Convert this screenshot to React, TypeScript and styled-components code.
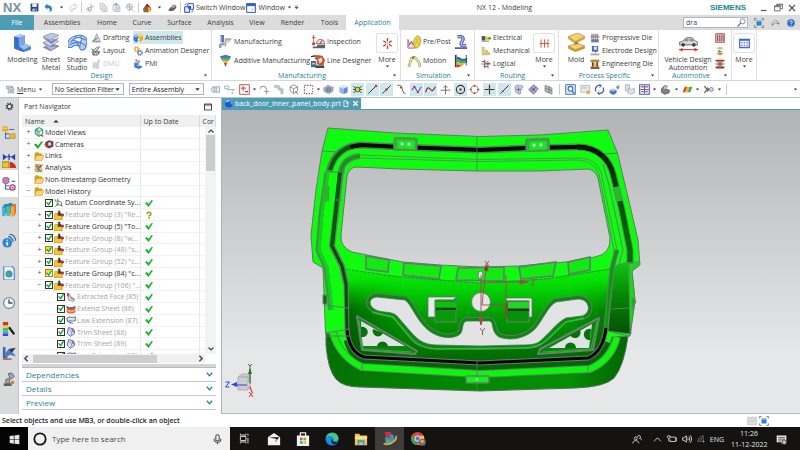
import React from "react";
import styled, { createGlobalStyle } from "styled-components";

const ink = "#3c3c3c";
const teal = "#1f7f9c";
const highlight = "#cfe8ee";
const line = "#c9cbcc";

const GlobalStyle = createGlobalStyle`
  * { box-sizing: border-box; }
  html, body { margin: 0; padding: 0; }
  body, button, input, select {
    font-family: "Open Sans", "Noto Sans", sans-serif;
    font-size: 7px;
    line-height: 9px;
    color: ${ink};
  }
  button { background: none; border: 0; padding: 0; margin: 0; }
  svg { display: block; flex: none; }
`;

/* ---------- icons, all on a 16 x 16 grid ---------- */

const g = "#a9adb0";

const cube = (a: string, b: string, c: string) => (
  <>
    <path d="M8 1l6 3-6 3-6-3z" fill={a} />
    <path d="M2 4l6 3v8l-6-3z" fill={b} />
    <path d="M14 4L8 7v8l6-3z" fill={c} />
  </>
);

const icons: Record<string, React.ReactNode> = {
  save: (
    <>
      <path d="M1 1h14v14H1z" fill="#274a8c" />
      <path d="M4 1h8v6H4z" fill="#eef3fb" />
      <path d="M4 10h8v5H4z" fill="#9eb4dc" />
      <path d="M9 11h2v3H9z" fill="#274a8c" />
    </>
  ),
  undo: <path d="M1 6l5-5v3c6 0 9 3 8 9-1 2-3 3-5 3 3-4 1-7-3-7v3z" fill="#2f7fd6" />,
  redo: <path d="M15 6l-5-5v3C4 4 1 7 2 13c1 1 2 2 4 2-2-4 0-6 4-6v3z" fill="none" stroke={g} />,
  cut: (
    <g stroke={g} strokeWidth="1.6" fill="none">
      <path d="M9 1v14M3 9l11-3" />
      <circle cx="3" cy="11" r="2" />
      <circle cx="6" cy="13" r="2" />
    </g>
  ),
  copy: (
    <g stroke={g} strokeWidth="1.3" fill="#f4f4f4">
      <path d="M2 1h6l2 2v8H2z" />
      <path d="M6 5h6l2 2v8H6z" />
      <path d="M8 9h4M8 12h4" />
    </g>
  ),
  paste: (
    <g stroke={g} strokeWidth="1.3" fill="#f1f1f1">
      <path d="M2 3h10v11H2z" />
      <path d="M5 1h4v3H5z" fill={g} />
      <path d="M7 7h7v8H7zM9 10h3M9 12h3" />
    </g>
  ),
  target: (
    <g stroke={g} strokeWidth="1.4" fill="none">
      <circle cx="8" cy="7" r="5" />
      <path d="M8 0v15M1 7h14M10 10l5 5M3 2l10 10" />
    </g>
  ),
  touch: (
    <>
      <path d="M2 9l5-7 6 3 2 6-6 4-6-1z" fill="#d8342a" />
      <path d="M2 9l3-2 3 7-5 1z" fill="#3a9a38" />
      <path d="M9 6l4 2 1 5-4 1z" fill="#f2b52c" />
      <path d="M6 3l3-2 2 4-3 2z" fill="#63401f" />
    </>
  ),
  brush: (
    <>
      <path d="M1 12l4-5 6 1 3-5 1 5-4 5-6 1z" fill="#4a5fa8" />
      <path d="M6 4l6-2 1 4-5 3z" fill="#e69a3a" />
      <path d="M1 13h8" stroke="#8a5a28" strokeWidth="2" />
    </>
  ),
  switchWin: (
    <g fill="#fff" stroke="#2b55c4" strokeWidth="1.6">
      <path d="M6 1h9v9H6z" />
      <path d="M1 6h8v9H1z" fill="#dbe8ff" />
      <path d="M1 3l3-2M12 14l3-2" />
      <circle cx="9" cy="7" r="2" fill="#2b55c4" />
    </g>
  ),
  windowIc: (
    <>
      <path d="M1 1h14v14H1z" fill="#fff" stroke="#2b55c4" strokeWidth="1.6" />
      <path d="M1 1h14v4H1z" fill="#2b62d8" />
      <path d="M8 8h6v6H8z" fill="#dfe9fb" />
    </>
  ),
  modeling: (
    <>
      <path d="M1 3l5-2 4 1v7l5 2v3l-6 2-8-3z" fill="#4a7fd4" />
      <path d="M1 3l5-2 4 1-5 2z" fill="#b4d0fa" />
      <path d="M1 3l4 1v8l4 2v2l-8-3z" fill="#3b6ec2" />
      <path d="M5 11l5-2 5 2-6 3z" fill="#9abff5" />
      <path d="M5 4l5-2v7l-5 2z" fill="#7aa6ea" />
    </>
  ),
  sheet: (
    <g stroke="#6e7894" strokeWidth=".5">
      <path d="M1 12l7-3 6 2-7 4z" fill="#8696c8" />
      <path d="M1 8l7 3 6 0-7 4z" fill="#a9b4da" />
      <path d="M1 8l7-3 6 2-7 4z" fill="#d3daf3" />
      <path d="M1 4l7 3 6-3-6 5z" fill="#7f8db8" />
      <path d="M1 3l7-3 6 2-7 4z" fill="#bac5e8" />
    </g>
  ),
  shape: (
    <g stroke="#4e7dcb" strokeWidth=".9" fill="none">
      <path d="M0 8C1 2 14-1 16 6l-1 6c-1 3-4 3-5 1-1-4-5-3-7-1-3 1-4-1-3-4z" fill="#b8d0f4" />
      <path d="M2 8c3-4 9-5 13-2M6 3l3 8M1 10c4-2 9-4 14 1M11 2l-1 10" />
      <path d="M4 6c2-2 5-3 8-1l-2 3z" fill="#eef4ff" />
    </g>
  ),
  drafting: (
    <>
      <path d="M5 11L9 1l6 13H7z" fill="#e2cde4" stroke="#8d7eb5" />
      <path d="M1 13L9 7l2 1-7 6z" fill="#5bb04c" />
      <path d="M2 14h13" stroke="#6b88c8" strokeWidth="1.5" />
    </>
  ),
  layout: (
    <>
      <path d="M2 8l9-7 3 1-8 8z" fill="#d7dadd" stroke="#4b4f52" />
      <path d="M1 10l9-3 5 2-4 6H3z" fill="#6d7276" />
      <path d="M3 12h8M5 9l3 6M9 8l2 6" stroke="#fff" strokeWidth=".8" />
      <path d="M1 4l4 5" stroke="#2d8a3a" strokeWidth="1.4" />
    </>
  ),
  dmu: (
    <g fill="#dcdcdc" stroke="#c0c0c0">
      <path d="M3 14V7l3-2 3 2 3-6 2 1-2 7v6z" />
      <path d="M6 8v5M9 8v5" />
    </g>
  ),
  asm: (
    <>
      <path d="M1 5l4-3 4 2v8l-4 3-4-3z" fill="#3b7ddb" />
      <path d="M1 5l4-3 4 2-4 3z" fill="#8fc0ff" />
      <path d="M8 4l4-3 4 3v7l-4 3-4-3z" fill="#f5a81c" />
      <path d="M8 4l4-3 4 3-4 3z" fill="#ffd568" />
      <path d="M8 8l3 2-3 3z" fill="#fff" />
    </>
  ),
  gears: (
    <>
      <circle cx="6" cy="5" r="3.5" fill="none" stroke="#e6a030" strokeWidth="2.4" strokeDasharray="2 1" />
      <circle cx="6" cy="5" r="2.6" fill="none" stroke="#e6a030" strokeWidth="1.2" />
      <circle cx="11" cy="11" r="3.5" fill="none" stroke="#5d82bd" strokeWidth="2.4" strokeDasharray="2 1" />
      <circle cx="11" cy="11" r="2.6" fill="none" stroke="#5d82bd" strokeWidth="1.2" />
    </>
  ),
  pmi: (
    <>
      <path d="M2 6l5-2 2 1v5l5 1v3l-5 2-7-3z" fill="#3f78d0" />
      <path d="M2 6l5-2 2 1-4 2z" fill="#a3c6f7" />
      <path d="M4 2l6 2M5 0v4M10 2v4" stroke="#d2553a" strokeWidth="1.3" />
      <path d="M6 10h6" stroke="#e8f0ff" />
    </>
  ),
  mill: (
    <>
      <path d="M2 0h4v9H2z" fill="#4f6398" />
      <path d="M3 1h1v7H3z" fill="#b8c6e6" />
      <path d="M0 11l7-2v4H3v3H0z" fill="#8aa3c4" />
      <path d="M7 4h9l-2 3H9v7H7z" fill="#a8adb2" />
      <path d="M9 7h5l-2 3H9z" fill="#d3d6d9" />
    </>
  ),
  additive: (
    <>
      <path d="M1 3l7-2 7 2-3 5H4z" fill="#5470b8" />
      <path d="M2 5h12l-2 3H4z" fill="#45b36a" />
      <path d="M4 8h8l-2 3H6z" fill="#f0b43a" />
      <path d="M6 11h4l-2 5z" fill="#cf3b30" />
    </>
  ),
  inspect: (
    <>
      <path d="M3 0v9M1 3h4" stroke="#cf6a6a" strokeWidth="1.2" />
      <circle cx="3" cy="10" r="1.8" fill="#cf3030" />
      <path d="M6 10a5 5 0 0110 0z" fill="#f2e0dc" stroke="#b05248" />
      <path d="M2 13h6v2H2zM7 11h9v4H7z" fill="#5c646b" />
      <path d="M10 10l3-4" stroke="#222" />
    </>
  ),
  robot: (
    <>
      <path d="M5 13h10v3H5z" fill="#41484e" />
      <path d="M7 12V7L4 5l3-4 6 1 3 5-2 6z" fill="#c8552e" />
      <path d="M8 6l4-2 1 4-3 3z" fill="#f0e4dc" />
      <path d="M0 8h6v7H0z" fill="#3f6290" />
      <path d="M1 10h4v2H1z" fill="#a9c4e2" />
      <path d="M0 3l6-1" stroke="#333" strokeWidth="1.6" />
    </>
  ),
  burst: (
    <g stroke="#cf3b2e" strokeWidth="2">
      <path d="M8 0v5M8 11v5" stroke="#a64d4d" />
      <path d="M2 4l4 3M10 9l4 3M14 4l-4 3M6 9l-4 3" />
      <circle cx="8" cy="8" r="1.2" fill="#e2a33a" stroke="none" />
    </g>
  ),
  prepost: (
    <>
      <path d="M1 5v10h8V9l-2 2-2-4-2 4z" fill="#e6dbe9" stroke="#8a6aa0" />
      <path d="M1 13l4-5 3 4" fill="none" stroke="#d03c3c" />
      <ellipse cx="11.500" cy="8" rx="3.800" ry="7" fill="#ead94c" stroke="#b39d1e" transform="rotate(10 11.500 8)" />
      <path d="M10 4l4 8M13 3l-4 9" stroke="#c4ae24" strokeWidth=".7" />
    </>
  ),
  motion: (
    <>
      <path d="M2 15L5 5l4-1 5 6 1 5" fill="none" stroke="#a2a05a" strokeWidth="3" />
      <path d="M2 15L5 5l4-1 5 6 1 5" fill="none" stroke="#ece9b2" strokeWidth="1.4" />
      <circle cx="7" cy="4" r="1.4" fill="#77743a" />
    </>
  ),
  pipe: (
    <>
      <path d="M4 2c8-1 7 3 5 6s0 5 5 4" fill="none" stroke="#5d62a8" strokeWidth="4" />
      <path d="M4 2c8-1 7 3 5 6s0 5 5 4" fill="none" stroke="#b3b8e8" strokeWidth="1.6" />
      <path d="M1 15h14" stroke="#5d62a8" strokeWidth="2" />
    </>
  ),
  flow: (
    <>
      <path d="M2 1v14" stroke="#3d3d3d" strokeWidth="2" />
      <path d="M3 3c5 0 6 5 12 1v3c-6 3-8 0-12-1z" fill="#3a5fd0" />
      <path d="M3 6c5 1 6 4 12 1v3c-6 2-8 0-12-1z" fill="#37b35a" />
      <path d="M3 9c5 1 6 3 10 1l-3 3c-3 1-5 0-7-1z" fill="#f0b128" />
      <path d="M3 12c3 1 5 1 6 1l-4 2H3z" fill="#d8342a" />
      <path d="M14 1v12" stroke="#3d3d3d" />
    </>
  ),
  electrical: (
    <>
      <path d="M1 5h6v7H1z" fill="#4b555c" />
      <path d="M7 6h7v5H7z" fill="#e2c03a" />
      <path d="M12 7h4v3h-4z" fill="#3c8a48" />
      <path d="M1 13h12" stroke="#5b9b48" strokeWidth="1.6" />
    </>
  ),
  mechanical: (
    <>
      <path d="M2 2h3v9h9v3H2z" fill="#ded488" stroke="#b0a34c" />
      <path d="M8 11V6l4 5" fill="none" stroke="#b0a34c" strokeWidth="1.6" />
    </>
  ),
  logical: (
    <g fill="none" stroke="#b24a4a" strokeWidth="1.5">
      <path d="M1 4h5l2 3h7M1 8h14M4 12h6l2 3" />
      <path d="M6 1v14M11 3v10" stroke="#5b5b6b" />
    </g>
  ),
  routingMore: (
    <g stroke="#e0563a" strokeWidth="1.4">
      <path d="M3 2v12M8 2v12M13 2v12M1 8h14" />
    </g>
  ),
  mold: (
    <>
      <path d="M1 3l8-3 6 3-8 4z" fill="#f4d27a" stroke="#b48928" strokeWidth=".6" />
      <path d="M1 3l6 4v2L1 5zM15 3L7 7v2l8-4z" fill="#d4a640" />
      <path d="M8 8v3" stroke="#8a6418" strokeWidth="3" />
      <path d="M1 11l8-2 6 2-8 3z" fill="#f4d27a" stroke="#b48928" strokeWidth=".6" />
      <path d="M1 11l6 3v2l-6-3zM15 11l-8 3v2l8-3z" fill="#c8952c" />
    </>
  ),
  progDie: (
    <>
      <path d="M1 4h14v4H1z" fill="#a7adc9" />
      <path d="M2 10h12v5H2z" fill="#7a83a2" />
      <path d="M3 1v13M6 1v13M9 1v13M12 1v13" stroke="#5c637c" />
      <path d="M3 3h9" stroke="#d07a50" strokeWidth="1.4" />
    </>
  ),
  electrode: (
    <>
      <path d="M3 0h10v9H3z" fill="#4169b8" />
      <path d="M6 1h5v5H6z" fill="#dfe8f8" />
      <path d="M8 6l3 2-3 4z" fill="#c8543c" />
      <path d="M1 12h14v3H1z" fill="#a3abb4" />
    </>
  ),
  engDie: (
    <>
      <path d="M1 1h14v4H1z" fill="#b8873a" />
      <path d="M1 12h14v4H1z" fill="#8a5d2a" />
      <path d="M3 5h3v7H3zM10 5h3v7h-3z" fill="#6b3b2c" />
      <path d="M6 6h4v6H6z" fill="#e2bb68" />
    </>
  ),
  car: (
    <>
      <path d="M0 8l3-1 3-3h5l3 3 2 1v2H0z" fill="#d8dadb" stroke="#4d5356" strokeWidth=".7" />
      <path d="M4 7l2-2h2v2zM9 7V5h2l2 2z" fill="#7e8a90" />
      <circle cx="3.500" cy="10" r="1.500" fill="#3a3e40" />
      <circle cx="12.500" cy="10" r="1.500" fill="#3a3e40" />
      <path d="M0 14h16" stroke="#d8342a" strokeWidth=".9" />
      <path d="M0 14l3-1.500v3zM16 14l-3-1.500v3z" fill="#d8342a" />
    </>
  ),
  bars: (
    <>
      <path d="M1 1h14v14H1z" fill="#f3b3a6" stroke="#d65a4a" strokeWidth="1.5" />
      <path d="M4 3v10M7 3v10M10 3v10M13 3v10" stroke="#4e5fa8" strokeWidth="1.3" />
    </>
  ),
  dieStack: (
    <>
      <path d="M2 3l6-2 6 2-6 3z" fill="#e9b84c" />
      <path d="M4 6l8 3-6 2z" fill="#3c8ad0" />
      <path d="M2 12l6-2 6 2-6 3z" fill="#d49a2e" />
    </>
  ),
  press: (
    <>
      <path d="M1 1h14v3H1zM1 12h14v3H1z" fill="#a03030" />
      <path d="M3 4h10l-3 4 3 4H3l3-4z" fill="#d87a34" />
      <path d="M1 8h14" stroke="#3a5ba8" strokeWidth="1.6" />
    </>
  ),
  tableIc: (
    <>
      <path d="M1 2h14v12H1z" fill="#e9f0ff" stroke="#3a66cf" strokeWidth="1.6" />
      <path d="M1 2h14v2H1z" fill="#3a66cf" />
      <path d="M3 7h2M7 7h2M11 7h2M3 11h2M7 11h2M11 11h2" stroke="#7b6fd0" strokeWidth="2" />
    </>
  ),
  menuList: (
    <g stroke="#6a7378" fill="#eef1f3">
      <path d="M1 2h10v4H1z" />
      <path d="M4 5h10v9H4z" />
      <path d="M6 8h6M6 10h6M6 12h6" stroke="#4b7fb0" />
    </g>
  ),
  snapGrey: (
    <g stroke={g} strokeWidth="1.4" fill="#e8e8e8">
      <circle cx="6" cy="8" r="4" />
      <path d="M6 3v10M9 4h5v8H9z" />
    </g>
  ),
  filterGrey: (
    <g stroke={g} strokeWidth="1.4" fill="none">
      <path d="M1 3h6v4H1zM8 8h7l-3 3v4M4 7l4 3" />
    </g>
  ),
  stepGrey: (
    <g fill="#c9cccd" stroke={g} strokeWidth="1">
      <path d="M1 2h6l2 3v3H6L4 5H1zM8 7h5v7h-3V9H8z" />
    </g>
  ),
  redPlus: (
    <>
      <path d="M1 1h14v14H1z" fill="#fff" stroke="#d44a44" strokeWidth="1.4" />
      <path d="M6 3v7M3 6h7" stroke="#c3342c" strokeWidth="1.4" />
      <path d="M9 11h4" stroke="#555" strokeWidth="2" />
    </>
  ),
  cornerGrey: (
    <g stroke="#9aa0a3" strokeWidth="1.6" fill="none">
      <path d="M2 7c0-5 8-5 8 0M7 11h8M11 7v8" />
    </g>
  ),
  wires: (
    <g stroke="#83898c" strokeWidth="1.3" fill="none">
      <path d="M3 4l5-3 6 3v6l-6 4-5-4z" />
      <path d="M3 4l5 3 6-3M8 7v7" />
      <path d="M11 11l4 4" stroke="#cf3b2e" />
    </g>
  ),
  marquee: <path d="M2 2h12v12H2z" fill="none" stroke="#a23b52" strokeWidth="1.5" strokeDasharray="2 2" />,
  view: (
    <>
      <path d="M1 6l6-4 8 3-1 6-6 3-6-3z" fill="#c3cad1" stroke="#6a747c" />
      <ellipse cx="8" cy="8" rx="4" ry="3" fill="#7f97b2" stroke="#56616b" />
    </>
  ),
  blueCube: cube("#d5e6ff", "#8db4ee", "#5a8ad6"),
  snapPts: (
    <>
      <path d="M2 3l12 10M14 3L2 13" stroke="#3a9a38" strokeWidth="1.6" />
      <circle cx="8" cy="8" r="3.5" fill="#f2cb2c" stroke="#333" />
      <path d="M2 8h3M11 8h3" stroke="#222" strokeWidth="1.6" />
    </>
  ),
  endPt: (
    <>
      <path d="M2 14L13 3" stroke="#333" strokeWidth="1.4" />
      <circle cx="13" cy="3" r="1.8" fill="#d02f2f" />
    </>
  ),
  midPt: (
    <>
      <path d="M2 14L14 2" stroke="#333" strokeWidth="1.4" />
      <circle cx="8" cy="8" r="1.8" fill="#d02f2f" />
    </>
  ),
  curveS: (
    <>
      <path d="M2 2h3c6 0 2 11 9 12" fill="none" stroke="#555" strokeWidth="1.4" />
      <circle cx="7" cy="5" r="1.500" fill="#d02f2f" />
    </>
  ),
  poly: (
    <>
      <path d="M1 9l4-5 5 8 5-8" fill="none" stroke="#7a48b0" strokeWidth="1.5" />
      <circle cx="5" cy="4" r="1.600" fill="#d02f2f" />
      <circle cx="10" cy="12" r="1.600" fill="#d02f2f" />
    </>
  ),
  wave: <path d="M1 12c2-9 5-7 7-4s4 2 7-4" fill="none" stroke="#8b2f3c" strokeWidth="1.8" />,
  cross: <path d="M8 2v13M1 9h14M5 5l3-2 3 2" fill="none" stroke="#666" strokeWidth="1.3" />,
  circleDot: (
    <>
      <circle cx="8" cy="8" r="6" fill="none" stroke="#333" strokeWidth="1.6" />
      <circle cx="8" cy="8" r="2" fill="#d02f2f" />
    </>
  ),
  quad: (
    <>
      <circle cx="8" cy="8" r="5.500" fill="none" stroke="#8a8a8a" strokeWidth="1.2" />
      <path d="M8 1v3M8 12v3M1 8h3M12 8h3" stroke="#d02f2f" strokeWidth="2.4" />
    </>
  ),
  plus: (
    <>
      <path d="M8 1v14M1 8h14" stroke="#333" strokeWidth="1.6" />
      <circle cx="8" cy="8" r="1.500" fill="#d02f2f" />
    </>
  ),
  slash: (
    <>
      <path d="M2 14L14 2" stroke="#333" strokeWidth="1.4" />
      <circle cx="6" cy="10" r="1.400" fill="#d02f2f" />
    </>
  ),
  face: (
    <>
      <path d="M3 4c3-4 10-2 12 0-3 2-5 6-4 10-4 2-9-2-8-10z" fill="#b6cbe9" stroke="#5f82b8" />
      <path d="M8 5v6M5 8h6" stroke="#d02f2f" />
    </>
  ),
  purple: (
    <>
      <path d="M8 1l7 6-7 8-7-7z" fill="#a3a6d8" stroke="#5b5fa8" />
      <path d="M4 5l8 7M12 4l-8 7" stroke="#5b5fa8" />
      <circle cx="8" cy="8" r="1.600" fill="#d02f2f" />
    </>
  ),
  meshGrey: (
    <g fill="#b9bdbf" stroke="#6c7274">
      <path d="M3 2l6 2v9l-6-2z" />
      <path d="M9 4l4 2v9l-4-2zM3 6l10 4" />
    </g>
  ),
  zoomFit: (
    <>
      <path d="M1 1h14v14H1z" fill="#e3ecf8" stroke="#4b6fb0" strokeWidth="1.4" />
      <circle cx="8" cy="7" r="3.500" fill="#fff" stroke="#2e6bc0" strokeWidth="1.600" />
      <path d="M10 10l4 4" stroke="#2e6bc0" strokeWidth="2" />
    </>
  ),
  panel: (
    <>
      <path d="M1 2h13v10H1z" fill="#e9eaeb" stroke="#a6abae" />
      <path d="M3 4h7v3H3z" fill="#c9ced2" />
      <circle cx="12" cy="12" r="3" fill="#e3b25a" />
    </>
  ),
  rotate: (
    <g fill="none" stroke="#3f5fb0" strokeWidth="1.8">
      <path d="M3 11C0 5 5 1 10 2.500M13 5c3 6-2 10-7 8.500" />
      <path d="M8 0l3 3-3 2M8 16l-3-3 3-2" strokeWidth="1.400" />
    </g>
  ),
  blocks: (
    <>
      <path d="M1 9l5-2 5 2v4l-5 3-5-3z" fill="#4b72c8" />
      <path d="M1 9l5-2 5 2-5 2z" fill="#a8c4f4" />
      <path d="M10 4l5-3v5l-3 2z" fill="#7a8fd0" />
    </>
  ),
  clip: (
    <g fill="#e0e2e3" stroke="#9ca1a4">
      <path d="M2 1h6v9H2z" />
      <path d="M6 6l5 2 4-2v7l-4 2-5-2z" />
    </g>
  ),
  orient: (
    <>
      <path d="M1 1h14v14H1z" fill="#fff" stroke="#3f5fc0" strokeWidth="1.600" />
      <path d="M8 2v12M2 8h12" stroke="#3f5fc0" strokeWidth="1.400" />
      <path d="M3 4h4M9 4h4M3 11h4M9 11h4" stroke="#d8544a" strokeWidth="2" />
    </>
  ),
  shade: (
    <>
      <path d="M2 7l5-5 4 1-3 4 6 2-1 4-6 2-5-3z" fill="#7b8185" stroke="#4e5457" />
      <path d="M7 2l4 1-3 4-3 1z" fill="#c0c5c8" />
    </>
  ),
  stripes: (
    <>
      <path d="M4 4h4L5 12H1z" fill="#d83a34" />
      <path d="M7 4h4l-3 8H4z" fill="#f2b52c" />
      <path d="M11 4h4l-3 8H8z" fill="#45a850" />
    </>
  ),
  snapLink: (
    <>
      <path d="M2 3l4 5-4 5" stroke="#3c8a48" strokeWidth="2" fill="none" />
      <path d="M6 4l4 4-4 4z" fill="#c43c4c" />
      <circle cx="12" cy="8" r="3" fill="#cdd5f3" stroke="#5b6fb0" />
    </>
  ),
  gear: (
    <>
      <circle cx="8" cy="8" r="5.500" fill="none" stroke="#3f4446" strokeWidth="3" strokeDasharray="2.2 2.100" />
      <circle cx="8" cy="8" r="4" fill="#e9eaea" stroke="#3f4446" strokeWidth="1.800" />
    </>
  ),
  asmNav: (
    <>
      <path d="M0 1l3-1 4 1v5H0z" fill="#eba81e" />
      <path d="M0 2h6v1H0z" fill="#ffe08a" />
      <path d="M4 7v7h5M4 9h4M8 4h6" stroke="#4470b0" fill="none" strokeWidth="1.200" />
      <path d="M9 9h6v5H9z" fill="#f2b83c" stroke="#b77e14" strokeWidth=".7" />
    </>
  ),
  constraint: (
    <>
      <path d="M1 0v7l5-3.500zM15 0v7l-5-3.500z" fill="#2540b8" />
      <path d="M6 3h4M8 0v7" stroke="#2540b8" strokeWidth="1.400" />
      <path d="M0 9h8v7H0z" fill="#f2c31c" stroke="#6a4d00" strokeWidth=".7" />
      <path d="M9 9c4 0 7 3 7 7H9z" fill="#cf2c22" />
    </>
  ),
  partNav: (
    <>
      <path d="M1 2c0-2 7-2 7 0v4c0 2-7 2-7 0z" fill="#c084b8" stroke="#8a4a86" strokeWidth=".8" />
      <path d="M4 8v6h5M4 10h4M11 5h4" stroke="#4470b0" fill="none" strokeWidth="1.400" />
      <circle cx="12" cy="12" r="3" fill="#f4d8ea" stroke="#b23a7e" strokeWidth="1.400" />
      <circle cx="12" cy="12" r="1" fill="#b23a7e" />
    </>
  ),
  books: (
    <>
      <path d="M0 5l3-4h4v11H0zM5 4l3-4h4v12H5z" fill="#2488b0" />
      <path d="M10 4l3-3h3v10l-2 4h-4z" fill="#d8762a" />
      <path d="M0 5h4v10H0z" fill="#43b4e4" />
      <path d="M5 4h4v11H5z" fill="#54c09a" />
      <path d="M10 4h4v11h-4z" fill="#f0a848" />
    </>
  ),
  info: (
    <>
      <circle cx="6" cy="10" r="5.500" fill="#2d86cf" />
      <path d="M6 9v4M6 6.500v1.200" stroke="#fff" strokeWidth="2" />
      <path d="M7 3c3 0 5 2 6 6M8 0c4 0 7 3 8 8" fill="none" stroke="#2f5f9c" strokeWidth="1.300" />
    </>
  ),
  web: (
    <>
      <path d="M2 0h9l3 3v13H2z" fill="#eaf2fb" stroke="#4f82bd" strokeWidth="1.300" />
      <circle cx="8" cy="9" r="4" fill="#3a90cf" />
      <path d="M5 7l3 1 1 4-3-1zM9 6l2 2-1 1z" fill="#54b648" />
    </>
  ),
  clock: (
    <>
      <circle cx="8" cy="8" r="7" fill="#7a8c99" />
      <circle cx="8" cy="8" r="5.500" fill="#f4f8fb" />
      <path d="M8 4v4h4" stroke="#34505f" strokeWidth="1.500" fill="none" />
    </>
  ),
  spectrum: (
    <>
      <path d="M1 0h6v4H1z" fill="#d83030" />
      <path d="M1 4h6v3H1z" fill="#f0d030" />
      <path d="M1 7h6v3H1z" fill="#3cc050" />
      <path d="M1 10h6v3H1z" fill="#38b8d8" />
      <path d="M1 13h6v3H1z" fill="#3a48c8" />
      <path d="M8 6l6 8" stroke="#1d1d1d" strokeWidth="2.400" />
    </>
  ),
  machine: (
    <>
      <path d="M1 1h3v10l3 3H1z" fill="#3b66b8" />
      <path d="M3 9l5-6 8-1-4 5 4 5-7-2-4 3z" fill="#4a79c0" />
      <path d="M8 4l7-2-4 5z" fill="#333" />
      <path d="M1 15h10" stroke="#9a5a30" strokeWidth="1.500" />
    </>
  ),
  arm: (
    <>
      <path d="M5 14L4 9l5-3-2-4 4-1 3 4-2 2-4 2 1 5z" fill="#a3a7aa" stroke="#5b5f61" />
      <path d="M2 13h9v3H2z" fill="#5c6163" />
      <circle cx="12" cy="12" r="2" fill="#c8803a" />
    </>
  ),
  views: (
    <>
      <path d="M8 1l6 3v7l-6 4-6-4V4z" fill="#e4f5ec" stroke="#1e8a62" strokeWidth="1.600" />
      <path d="M2 4l6 3 6-3M8 7v8M5 3v9" stroke="#1e8a62" strokeWidth="1.300" fill="none" />
      <path d="M11 13l4 2" stroke="#d03030" strokeWidth="2" />
    </>
  ),
  camera: (
    <>
      <path d="M2 5l6-3 7 2v8l-7 3-6-3z" fill="#8a3038" />
      <circle cx="9" cy="8" r="3.500" fill="#cfd8ea" stroke="#3b4a78" strokeWidth="1.300" />
      <path d="M1 8l4 5" stroke="#d84434" strokeWidth="2" />
    </>
  ),
  folder: (
    <>
      <path d="M1 4l2-2h4l1 2h5v10H1z" fill="#d79a22" />
      <path d="M4 7h12l-3 8H1z" fill="#fbd673" stroke="#c28a1c" strokeWidth=".8" />
    </>
  ),
  analysis: (
    <>
      <path d="M2 2h8l3 12H2z" fill="#f6e6a0" stroke="#9a7a2a" />
      <path d="M3 12c3-8 6-8 8-9l4-1-4 5z" fill="#d8503c" />
      <path d="M4 13l4-5 5 6z" fill="#57a850" />
      <circle cx="5" cy="5" r="2" fill="#5a78c8" />
    </>
  ),
  datum: (
    <>
      <path d="M6 1v9l8 3M6 10l-4 4M6 4l6 3v5" fill="none" stroke="#5d6366" strokeWidth="1.400" />
      <circle cx="6" cy="10" r="2" fill="#4aa860" />
      <path d="M1 2l3 4" stroke="#8a8f92" strokeWidth="2" />
    </>
  ),
  group: (
    <>
      <path d="M0 7l2-2h4l1 2h6v9H0z" fill="#f5c433" stroke="#9a7216" strokeWidth=".8" />
      <path d="M6 1h4v3l2 2v3H6V6l1-2z" fill="#4a3c38" />
      <circle cx="13.500" cy="8" r="2.500" fill="#c02820" />
    </>
  ),
  extract: (
    <>
      <path d="M2 2l4 2 2 4 6 3-2 4-8-2z" fill="#d2d6da" stroke="#7a8084" />
      <path d="M2 1l4 2-2 5-3-3z" fill="#d84a3c" />
      <path d="M7 8l5 4" stroke="#c03c3c" strokeWidth="1.500" />
    </>
  ),
  extend: (
    <>
      <path d="M1 3l4 2h5l5-2v10l-5 2H5l-4-2z" fill="#e8562e" />
      <path d="M1 3l4 2h5l5-2v3l-5 2H5L1 6z" fill="#5568b8" />
      <path d="M2 8l3 2h5l4-2v3l-4 2H5l-3-2z" fill="#f7b23c" />
    </>
  ),
  law: (
    <>
      <path d="M1 5l5-2 4 1 5-1v6l-5 1-4-1-3 2z" fill="#dfe3ee" stroke="#4c5688" strokeWidth="1.300" />
      <path d="M6 11l5 3M3 9l4 5" stroke="#4c5688" strokeWidth="1.400" />
    </>
  ),
  trim: (
    <>
      <path d="M4 1l8 2 2 7-7 5-5-5z" fill="#dce6fa" stroke="#4a6ac0" strokeWidth="1.500" />
      <path d="M8 2l6 4-3 3z" fill="#e0504a" />
      <path d="M5 5c4 0 5 4 3 8" stroke="#4a6ac0" fill="none" />
    </>
  ),
  check: <path d="M0 8l4-2 3 4 6-8 3 1-9 13z" fill="#16b327" />,
  question: (
    <>
      <path d="M4 6c0-5 8-5 8 0 0 3-4 2-4 5" fill="none" stroke="#a89a14" strokeWidth="3" />
      <circle cx="8" cy="14" r="1.800" fill="#a89a14" />
    </>
  ),
  part: (
    <>
      <path d="M2 4l6-3 3 2v5l4 2v3l-6 3-7-4z" fill="#1c57d8" />
      <path d="M2 4l6-3 3 2-6 3z" fill="#9cc4ff" />
    </>
  ),
  pageOut: (
    <>
      <path d="M11 7v8H2V2h6" fill="none" stroke="#fff" strokeWidth="1.800" />
      <path d="M8 1l6 5-6 3z" fill="#fff" />
    </>
  ),
  closeW: <path d="M3 3l10 10M13 3L3 13" stroke="#fff" strokeWidth="3" />,
  close: <path d="M2 2l12 12M14 2L2 14" stroke="#4b4f51" strokeWidth="2.200" />,
  restore: <path d="M5 5V2h10v8h-4M1 5h10v9H1zM1 6.500h10M5 3.500h10" fill="none" stroke="#4b4f51" strokeWidth="1.400" />,
  minimize: <path d="M2 13h11" stroke="#4b4f51" strokeWidth="2.200" />,
  maxi: <path d="M1 2h14v12H1zM1 4h14" fill="none" stroke="#333" strokeWidth="1.800" />,
  search: (
    <g fill="none" stroke="#7a7f82" strokeWidth="1.600">
      <circle cx="10" cy="6" r="4.500" />
      <path d="M7 9l-6 6" strokeWidth="2.400" />
    </g>
  ),
  fullscreen: (
    <>
      <path d="M4 1H1v3M12 1h3v3M4 15H1v-3M12 15h3v-3" fill="none" stroke="#666" strokeWidth="1.400" />
      <path d="M4 4h8v8H4z" fill="#2e80c8" />
      <path d="M4 4h8v2H4z" fill="#86bce8" />
    </>
  ),
  chevUp: <path d="M2 9l6-5 6 5v2L8 8l-6 5z" fill="#fff" stroke="#4c5052" strokeWidth="1.200" />,
  help: (
    <>
      <circle cx="8" cy="8" r="7.500" fill="#2f6ad0" />
      <path d="M5.500 6.500c0-4 5.500-3.500 5 0-.5 2-2.500 1.500-2.500 4M8 12v1.500" fill="none" stroke="#fff" strokeWidth="1.800" />
    </>
  ),
  chevD: <path d="M2 4l6 7 6-7" fill="none" stroke="#2b7c9a" strokeWidth="3" />,
  up: <path d="M3 11l5-5 5 5" fill="none" stroke="#444" strokeWidth="2.400" />,
  down: <path d="M3 5l5 5 5-5" fill="none" stroke="#444" strokeWidth="2.400" />,
  left: <path d="M10 3L5 8l5 5" fill="none" stroke="#444" strokeWidth="2.400" />,
  right: <path d="M6 3l5 5-5 5" fill="none" stroke="#444" strokeWidth="2.400" />,
  sort: <path d="M1 12l7-7 7 7z" fill="#222" />,
  drop: <path d="M3 5h10l-5 6z" fill="#333" />,
  dropBar: <path d="M3 3h10M3 7h10l-5 5z" fill="#333" stroke="#333" strokeWidth="1.500" />,
  winLogo: <path d="M1 3l6-1v5.500H1zM8 2l7-1v6.500H8zM1 8.500h6V14l-6-1zM8 8.500h7V15l-7-1z" fill="#e8e8e8" />,
  ring: <circle cx="8" cy="8" r="6.500" fill="none" stroke="#151515" strokeWidth="2" />,
  mic: (
    <g fill="none" stroke="#4a4a4a" strokeWidth="1.500">
      <rect x="5.500" y="1" width="5" height="9" rx="2.500" />
      <path d="M3 7c0 7 10 7 10 0M8 12v3" />
    </g>
  ),
  taskView: (
    <g fill="none" stroke="#ddd" strokeWidth="1.400">
      <path d="M2 5h8v6H2zM2 1v2h8V1M2 15v-2h8v2M13 1v3M13 7v8" />
    </g>
  ),
  mail: (
    <>
      <path d="M1 6l7-5 7 5v9H1z" fill="#f2f2f2" />
      <path d="M2 6h12L9 12l2-4z" fill="#111" />
    </>
  ),
  store: (
    <>
      <path d="M5 5V1h6v4" fill="none" stroke="#f2f2f2" strokeWidth="1.400" />
      <path d="M1 4h14v12H1z" fill="#f2f2f2" />
      <path d="M4.500 6.500h3v3h-3z" fill="#e8502a" />
      <path d="M8.500 6.500h3v3h-3z" fill="#7cb82e" />
      <path d="M4.500 10.500h3v3h-3z" fill="#2a9fe0" />
      <path d="M8.500 10.500h3v3h-3z" fill="#f2b82c" />
    </>
  ),
  edge: (
    <>
      <circle cx="8" cy="8" r="7.500" fill="#1673c4" />
      <path d="M1 6C3-1 14-1 15.500 7c0 3-3 4-6 3 1-3-1-5-3.500-5-2 0-4 .5-5 1z" fill="#42c88c" />
      <path d="M1 6c4-3 8-1 7.500 2C7 9 7 12 11 13c-3 3-10 1-10-7z" fill="#1c8fdc" />
      <path d="M8.500 8c-1 3 2 4.500 6 3-2 3-4 3-6 2-2-1-2-4 0-5z" fill="#0d1a2a" />
    </>
  ),
  explorer: (
    <>
      <path d="M1 2h5l1 2h8v11H1z" fill="#f6c546" />
      <path d="M1 5h14v3H1z" fill="#fde08c" />
      <path d="M4 9h8v6h-2v-3H6v3H4z" fill="#3aa0e4" />
    </>
  ),
  nxApp: (
    <>
      <path d="M3 8c1-4 6-6 9-4l2 5-5 6-5-1z" fill="#2a94cf" />
      <path d="M7 8l4 5-3 2-4-3z" fill="#4cb45c" />
      <path d="M3 1l7 0-2 7-4-2z" fill="#d02f3c" />
      <path d="M2 13C4 17 17 11 15 5" fill="none" stroke="#f2a234" strokeWidth="1.800" />
    </>
  ),
  chrome: (
    <>
      <circle cx="7" cy="8" r="7" fill="#e0443a" />
      <path d="M1 4.500l4 6 2 4.500A7 7 0 011 4.500z" fill="#35a452" />
      <path d="M7 15l3.500-5L10 5h3.500A7 7 0 017 15z" fill="#f8c830" />
      <circle cx="7" cy="8" r="3.200" fill="#fff" />
      <circle cx="7" cy="8" r="2.400" fill="#3f7fe8" />
      <circle cx="12" cy="12" r="3.800" fill="#7a6c66" />
      <circle cx="12" cy="11" r="1.500" fill="#d2b8a8" />
    </>
  ),
  people: (
    <g fill="none" stroke="#ddd" strokeWidth="1.400">
      <circle cx="6" cy="7" r="2.300" />
      <path d="M1 15c1-6 9-6 10 0M9 5a2.300 2.300 0 113 2c2 0 3 1 3.500 3" />
    </g>
  ),
  trayUp: <path d="M2 11l6-6 6 6" fill="none" stroke="#ddd" strokeWidth="1.600" />,
  battery: (
    <g fill="none" stroke="#ddd" strokeWidth="1.400">
      <path d="M5 5h9v7H5V9M14 7h2v3h-2M1 3h4v3L3 8 1 6zM3 8v4" />
    </g>
  ),
  sound: (
    <g fill="none" stroke="#ddd" strokeWidth="1.400">
      <path d="M1 6h2l4-3v10l-4-3H1zM9 6c1 1 1 3 0 4M11 4c2 2 2 6 0 8M13 2c3 3 3 9 0 12" />
    </g>
  ),
  wifi: (
    <g fill="none" stroke="#aaa" strokeWidth="1.400">
      <path d="M2 14C2 7 7 2 14 2M6 14c0-4 3-8 8-8M10 14c0-2 2-4 4-4" />
      <path d="M12 14l2-2v2z" fill="#ddd" />
    </g>
  ),
  note: (
    <>
      <path d="M1 2h14v10h-4l-3 3v-3H1z" fill="#eee" />
      <path d="M3 5h10M3 7.500h10M3 10h5" stroke="#222" />
      <circle cx="12" cy="12" r="3.500" fill="#bbb" stroke="#222" />
    </>
  ),
  grip: (
    <g fill="#dcdddd" stroke="#b5b8b9">
      <path d="M1 2h14v12H1z" />
      <path d="M3 10l4-4 3 3 3-4" />
    </g>
  ),
};

type IcoProps = { n: string; s?: number };
const Ico = ({ n, s = 10 }: IcoProps) => (
  <svg width={s} height={s} viewBox="0 0 16 16" aria-hidden="true">
    {icons[n]}
  </svg>
);

/* ---------- shell ---------- */

const Shell = styled.div`
  display: flex;
  flex-direction: column;
  min-height: 100vh;
  background: #fff;
  overflow: hidden;
`;

const TitleBar = styled.header`
  display: flex;
  align-items: center;
  height: 15px;
  flex: none;
  padding-left: 3px;
`;

const Logo = styled.strong`
  width: 26px;
  margin-right: 1px;
  flex: none;
  font: 700 13px/15px "Liberation Sans", sans-serif;
  color: #7690a0;
`;

const QuickTools = styled.div<{ $w: number }>`
  display: flex;
  align-items: center;
  justify-content: space-between;
  flex: none;
  width: ${(p) => p.$w}px;
`;

const Rule = styled.i<{ $h?: number; $m?: number }>`
  width: 1px;
  height: ${(p) => p.$h ?? 11}px;
  margin: 0 ${(p) => p.$m ?? 4}px;
  background: ${line};
  flex: none;
`;

const IconButton = styled.button<{ $on?: boolean; $w?: number }>`
  display: flex;
  align-items: center;
  justify-content: center;
  flex: none;
  width: ${(p) => p.$w ?? 10}px;
  height: 13px;
  background: ${(p) => (p.$on ? highlight : "transparent")};
`;

const TextTool = styled.button`
  display: flex;
  align-items: center;
  gap: 2px;
  flex: none;
  white-space: nowrap;
`;

const AppTitle = styled.h1`
  margin: 0;
  flex: 1;
  text-align: center;
  font-size: 7px;
  font-weight: 400;
`;

const Brand = styled.strong`
  font: 700 8px/10px "Liberation Sans", sans-serif;
  color: #17898f;
`;

const WindowButtons = styled.div`
  display: flex;
  gap: 4px;
  padding: 0 3px 0 13px;
`;

const TabBar = styled.nav`
  display: flex;
  align-items: stretch;
  height: 15px;
  flex: none;
  background: #dcdcdc;
`;

const Tab = styled.button<{ $w: number; $kind?: "file" | "active" }>`
  width: ${(p) => p.$w}px;
  flex: none;
  text-align: center;
  color: ${(p) => (p.$kind === "file" ? "#fff" : p.$kind === "active" ? teal : ink)};
  background: ${(p) => (p.$kind === "file" ? "#4f9db5" : p.$kind === "active" ? "#fff" : "transparent")};
`;

const TabEnd = styled.div`
  display: flex;
  align-items: center;
  gap: 6px;
  margin-left: auto;
  padding-right: 4px;
`;

const SearchBox = styled.label`
  display: flex;
  align-items: center;
  width: 65px;
  height: 11px;
  background: #fff;
  border: 1px solid #b3b6b8;
  padding-right: 1px;
`;

const SearchInput = styled.input`
  flex: 1;
  min-width: 0;
  border: 0;
  padding: 0 2px;
  height: 9px;
  background: transparent;
  outline: 0;
`;

/* ---------- ribbon ---------- */

const Ribbon = styled.section`
  display: flex;
  height: 51px;
  flex: none;
  border-bottom: 1px solid #d4d6d7;
`;

const Group = styled.div<{ $w: number }>`
  display: flex;
  flex-direction: column;
  flex: none;
  width: ${(p) => p.$w}px;
  padding-top: 1px;
  border-right: 1px solid #dedfe0;
`;

const GroupBody = styled.div<{ $pad: number }>`
  display: flex;
  flex: 1;
  min-height: 0;
  padding-left: ${(p) => p.$pad}px;
`;

const Caption = styled.div`
  display: grid;
  grid-template-columns: 1fr 8px;
  align-items: center;
  flex: none;
  height: 9px;
  text-align: center;
  white-space: nowrap;
  color: ${teal};
`;

const Column = styled.div<{ $w: number; $top?: number }>`
  display: flex;
  flex-direction: column;
  align-items: flex-start;
  flex: none;
  width: ${(p) => p.$w}px;
  padding-top: ${(p) => p.$top ?? 0}px;
`;

const Tool = styled.button<{ $tall?: boolean; $on?: boolean; $off?: boolean }>`
  display: flex;
  align-items: center;
  gap: 2px;
  height: ${(p) => (p.$tall ? 19 : 13)}px;
  flex: none;
  padding-right: 1px;
  white-space: nowrap;
  color: ${(p) => (p.$off ? "#c6c8c9" : ink)};
  background: ${(p) => (p.$on ? highlight : "transparent")};
`;

const BigTool = styled.button<{ $w: number }>`
  display: flex;
  flex-direction: column;
  align-items: center;
  flex: none;
  gap: 4px;
  width: ${(p) => p.$w}px;
  padding-top: 2px;
  line-height: 8px;
  text-align: center;
`;

const MoreTool = styled.button`
  display: flex;
  flex-direction: column;
  align-items: center;
  flex: none;
  width: 22px;
  margin-top: 2px;
  height: 38px;
`;

const MoreFace = styled.span`
  display: flex;
  align-items: center;
  justify-content: center;
  flex: none;
  width: 22px;
  height: 20px;
  margin-bottom: 2px;
  border: 1px solid #dfe1e2;
  border-radius: 2px;
`;

const More = ({ icon }: { icon: string }) => (
  <MoreTool>
    <MoreFace>
      <Ico n={icon} s={11} />
    </MoreFace>
    More
    <Ico n="drop" s={5} />
  </MoreTool>
);

type ToolDef = [icon: string, label: string, state?: "on" | "off"];
const Tools = ({ items, w, tall, s = 10 }: { items: ToolDef[]; w: number; tall?: boolean; s?: number }) => (
  <Column $w={w} $top={tall ? 1 : 0}>
    {items.map(([icon, label, state]) => (
      <Tool key={icon} $tall={tall} $on={state === "on"} $off={state === "off"} aria-label={label || icon}>
        <Ico n={icon} s={s} />
        {label}
      </Tool>
    ))}
  </Column>
);

const GroupFoot = ({ children }: { children: React.ReactNode }) => (
  <Caption>
    <span>{children}</span>
    <Ico n="drop" s={5} />
  </Caption>
);

/* ---------- selection bar ---------- */

const SelectionBar = styled.section`
  display: flex;
  align-items: center;
  height: 17px;
  flex: none;
  padding-left: 6px;
  border-bottom: 1px solid #b7c3c8;
`;

const SelectWrap = styled.label<{ $w: number }>`
  display: grid;
  align-items: center;
  justify-items: end;
  flex: none;
  width: ${(p) => p.$w}px;
  height: 12px;
  margin-right: 5px;
  border: 1px solid #b3b6b8;
  padding-right: 2px;
  & > * { grid-area: 1 / 1; }
`;

const Select = styled.select`
  appearance: none;
  width: 100%;
  height: 10px;
  border: 0;
  padding: 0 2px;
  background: transparent;
  color: #222;
`;

const Grow = styled.div`
  flex: 1;
`;

/* ---------- workspace ---------- */

const Workspace = styled.main`
  display: flex;
  flex: 1;
  min-height: 0;
`;

const ResourceBar = styled.nav`
  display: flex;
  flex-direction: column;
  width: 19px;
  flex: none;
  background: #d9dadb;
  border-right: 1px solid #c3c5c6;
`;

const Resource = styled.button<{ $h: number; $on?: boolean }>`
  display: flex;
  align-items: center;
  justify-content: center;
  height: ${(p) => p.$h}px;
  flex: none;
  background: ${(p) => (p.$on ? "#fff" : "transparent")};
`;

const Navigator = styled.section`
  display: flex;
  flex-direction: column;
  width: 194px;
  flex: none;
  margin-left: 3px;
`;

const NavTitle = styled.h2`
  display: flex;
  align-items: center;
  justify-content: space-between;
  margin: 0;
  height: 17px;
  flex: none;
  padding: 0 4px 0 2px;
  font-size: 7px;
  font-weight: 400;
`;

const TreeFrame = styled.div`
  display: grid;
  grid-template-columns: 1fr 11px;
  grid-template-rows: 12px 1fr;
  height: 239px;
  flex: none;
  overflow: hidden;
`;

const TreeClip = styled.div`
  grid-area: 1 / 1 / 3 / 3;
  overflow: hidden;
  height: 239px;
`;

const Tree = styled.table`
  width: 100%;
  height: 247px;
  border-collapse: collapse;
  table-layout: fixed;
`;

const HeadCell = styled.th<{ $w?: number }>`
  width: ${(p) => (p.$w ? `${p.$w}px` : "auto")};
  height: 12px;
  padding: 0 0 0 3px;
  font-weight: 400;
  text-align: left;
  background: #f0f0f0;
  border-right: 1px solid #d9dadb;
  white-space: nowrap;
  svg { display: inline-block; margin-left: 8px; }
`;

const Cell = styled.td`
  padding: 0 0 0 4px;
  border-right: 1px solid #e7e8e8;
  border-bottom: 1px solid #f1f1f1;
`;

const RowLabel = styled.div<{ $depth: number; $dim?: boolean }>`
  display: flex;
  align-items: center;
  gap: 1px;
  height: 10px;
  padding-left: ${(p) => p.$depth}px;
  white-space: nowrap;
  color: ${(p) => (p.$dim ? "#a3a5a6" : "#2e2e2e")};
`;

const NameCell = styled(Cell)`
  padding-left: 2px;
`;

const Toggle = styled.button`
  width: 9px;
  height: 9px;
  flex: none;
  line-height: 8px;
  color: #555;
  text-align: center;
`;

const Tick = styled.input<{ $warn?: boolean }>`
  appearance: none;
  display: grid;
  width: 8px;
  height: 8px;
  flex: none;
  margin: 0;
  border: 1px solid ${(p) => (p.$warn ? "#a8861c" : "#333")};
  background: ${(p) => (p.$warn ? "linear-gradient(135deg, #f8d83a 45%, #fff 46%)" : "#fff")};
  &:checked::before {
    content: "";
    background: #10a822;
    clip-path: polygon(0 45%, 20% 35%, 40% 60%, 85% 0, 100% 15%, 45% 100%);
  }
`;

const VScroll = styled.div`
  grid-area: 2 / 2;
  z-index: 1;
  display: flex;
  flex-direction: column;
  justify-content: space-between;
  align-items: center;
  padding-bottom: 1px;
  background: #f3f3f3;
`;

const VThumbArea = styled.div`
  flex: 1;
  width: 9px;
`;

const VThumb = styled.div`
  height: 36px;
  background: #cdcdcd;
`;

const HScroll = styled.div`
  display: flex;
  align-items: center;
  height: 9px;
  flex: none;
  margin-right: 11px;
  background: #f0f0f0;
`;

const HThumb = styled.div`
  width: 124px;
  height: 8px;
  margin: 0 auto 0 2px;
  background: #cdcdcd;
`;

const Splitter = styled.div`
  height: 4px;
  flex: none;
  margin-top: 1px;
  background: #d2d4d5;
  border-bottom: 1px solid #b9bcbd;
`;

const Section = styled.button`
  display: flex;
  align-items: center;
  justify-content: space-between;
  height: 14px;
  flex: none;
  padding: 0 3px 0 4px;
  font-size: 8px;
  color: ${teal};
  border-bottom: 1px solid #c6c8c9;
`;

const Stage = styled.section`
  display: flex;
  flex-direction: column;
  flex: 1;
  min-width: 0;
  margin-left: 5px;
  border-left: 1px solid #a8b4ba;
`;

const DocTabs = styled.div`
  display: flex;
  height: 11px;
  flex: none;
`;

const DocTab = styled.button`
  display: flex;
  align-items: center;
  gap: 2px;
  padding: 0 2px;
  color: #fff;
  background: #4f9db5;
  white-space: nowrap;
`;

const Canvas = styled.div`
  flex: 1;
  min-height: 0;
  border-top: 1px solid #4f9db5;
  border-bottom: 1px solid #b5b7b8;
  background: linear-gradient(#b2b3b5, #d0d1d3 45%, #e6e7e9 80%, #e6e7e9);
  overflow: hidden;
  svg { width: 100%; height: 100%; }
`;

const StatusBar = styled.footer`
  display: flex;
  align-items: center;
  gap: 2px;
  height: 13px;
  flex: none;
  padding: 0 31px 0 2px;
  font-weight: 600;
  color: #222;
`;

const Taskbar = styled.footer`
  display: flex;
  align-items: stretch;
  height: 24px;
  flex: none;
  background: #141311;
  color: #e6e6e6;
`;

const Start = styled.button`
  display: flex;
  align-items: center;
  justify-content: center;
  width: 28px;
  background: #050505;
`;

const TaskSearch = styled.label`
  display: flex;
  align-items: center;
  gap: 5px;
  width: 202px;
  padding: 0 7px 0 5px;
  background: #f0f0f0;
`;

const TaskInput = styled.input`
  flex: 1;
  min-width: 0;
  border: 0;
  padding: 0;
  background: transparent;
  font-size: 8px;
  line-height: 12px;
  outline: 0;
  &::placeholder { color: #4a4a4a; opacity: 1; }
`;

const TaskApp = styled.button<{ $state?: "open" | "active" }>`
  display: flex;
  align-items: center;
  justify-content: center;
  width: 29px;
  flex: none;
  background: ${(p) => (p.$state === "active" ? "#3d3c3a" : "transparent")};
  border-bottom: 1px solid ${(p) => (p.$state ? "#e8bfa8" : "transparent")};
`;

const Tray = styled.div`
  display: flex;
  align-items: center;
  gap: 5px;
  margin-left: auto;
  padding-right: 13px;
`;

const Clock = styled.time`
  display: block;
  width: 36px;
  margin: 0 4px 0 2px;
  line-height: 11px;
  text-align: center;
  white-space: nowrap;
`;

/* ---------- data ---------- */

type Row = {
  d: number;
  t?: string;
  tick?: boolean;
  warn?: boolean;
  icon: string;
  pre?: boolean;
  text: string;
  dim?: boolean;
  status?: "check" | "question";
};

const fg = (text: string, dim: boolean, t = "+", warn = false, status: "check" | "question" = "check"): Row => ({
  d: 11, t, tick: true, warn, icon: "group", text, dim, status,
});
const feat = (icon: string, text: string): Row => ({ d: 23, tick: true, icon, text, dim: true, status: "check" });

const rows: Row[] = [
  { d: 0, t: "+", icon: "views", text: "Model Views" },
  { d: 0, t: "+", pre: true, icon: "camera", text: "Cameras" },
  { d: 0, t: "+", icon: "folder", text: "Links" },
  { d: 0, t: "+", icon: "analysis", text: "Analysis" },
  { d: 0, icon: "folder", text: "Non-timestamp Geometry" },
  { d: 0, t: "−", icon: "folder", text: "Model History" },
  { d: 11, tick: true, icon: "datum", text: "Datum Coordinate Sy...", status: "check" },
  fg('Feature Group (3) "Re...', true, "+", false, "question"),
  fg('Feature Group (5) "To...', false),
  fg('Feature Group (8) "w...', true),
  fg('Feature Group (48) "s...', true, "+", true),
  fg('Feature Group (52) "c...', true),
  fg('Feature Group (84) "c...', false, "+", true),
  fg('Feature Group (106) "...', true, "−"),
  feat("extract", "Extracted Face (85)"),
  feat("extend", "Extend Sheet (86)"),
  feat("law", "Law Extension (87)"),
  feat("trim", "Trim Sheet (88)"),
  feat("trim", "Trim Sheet (89)"),
  feat("law", "Law Extension (90)"),
];

const resources: [string, number][] = [
  ["gear", 16], ["asmNav", 38], ["constraint", 18], ["partNav", 27], ["books", 26],
  ["info", 36], ["web", 28], ["clock", 32], ["spectrum", 20], ["machine", 28], ["arm", 24],
];

/* ---------- 3D part ---------- */

const edge = "#5f7d68";

const Bracket = ({ x, y, angle }: { x: number; y: number; angle: number }) => (
  <g transform={`rotate(${angle} ${x + 11} ${y + 6})`}>
    <rect x={x} y={y} width="23" height="12" rx="2" fill="#16c81e" stroke="#66806c" strokeWidth="1.500" />
    <rect x={x + 3} y={y + 2} width="18" height="9" rx="1" fill="#18e820" stroke="#4f9a58" strokeWidth=".7" />
    <circle cx={x + 8} cy={y + 6} r="1.600" fill="#dfe3e2" />
    <circle cx={x + 15} cy={y + 6} r="1.600" fill="#dfe3e2" />
  </g>
);

const slot =
  "M377 297L405 300C410 303 415 316 423 325C432 336 448 341 459 335C465 331 460 321 468 321L490 321C494 323 491 332 499 337C513 342 527 337 535 329C543 320 548 306 556 302L578 299C590 299 592 313 582 316L566 318C557 322 548 335 539 342C534 345 528 345 520 345L480 346L437 345C423 345 417 339 410 331L397 316C393 311 382 313 376 310C368 306 368 298 377 297Z";
const frameLow =
  "M332 246L342 266L346 284L347 330Q349 352 364 357L480 363L588 358Q603 352 606 328L612 268L617 250";

const Tailgate = () => (
  <svg viewBox="222 110 578 303" preserveAspectRatio="xMidYMid slice" role="img" aria-label="Back door inner panel">
    <defs>
      <linearGradient id="belly" x1="0" y1="266" x2="0" y2="364" gradientUnits="userSpaceOnUse">
        <stop offset="0" stopColor="#0af30a" />
        <stop offset=".2" stopColor="#04d904" />
        <stop offset=".5" stopColor="#029c02" />
        <stop offset="1" stopColor="#026402" />
      </linearGradient>
      <linearGradient id="sideShade" x1="345" y1="0" x2="612" y2="0" gradientUnits="userSpaceOnUse">
        <stop offset="0" stopColor="#003c00" stopOpacity=".6" />
        <stop offset=".22" stopColor="#003c00" stopOpacity="0" />
        <stop offset=".85" stopColor="#003c00" stopOpacity="0" />
        <stop offset="1" stopColor="#003c00" stopOpacity=".4" />
      </linearGradient>
      <linearGradient id="topFade" x1="0" y1="280" x2="0" y2="310" gradientUnits="userSpaceOnUse">
        <stop offset="0" stopColor="#000" />
        <stop offset="1" stopColor="#fff" />
      </linearGradient>
      <mask id="lowOnly">
        <rect x="320" y="260" width="310" height="120" fill="url(#topFade)" />
      </mask>
      <linearGradient id="skirt" x1="326" y1="0" x2="628" y2="0" gradientUnits="userSpaceOnUse">
        <stop offset="0" stopColor="#037003" />
        <stop offset=".12" stopColor="#047804" />
        <stop offset=".35" stopColor="#008400" />
        <stop offset=".8" stopColor="#058f05" />
        <stop offset="1" stopColor="#026602" />
      </linearGradient>
      <linearGradient id="bandV" x1="0" y1="145" x2="0" y2="250" gradientUnits="userSpaceOnUse">
        <stop offset="0" stopColor="#051205" />
        <stop offset=".4" stopColor="#044a06" />
        <stop offset="1" stopColor="#046d06" />
      </linearGradient>
      <linearGradient id="sidePanel" x1="0" y1="262" x2="0" y2="334" gradientUnits="userSpaceOnUse">
        <stop offset="0" stopColor="#0dc80d" />
        <stop offset=".45" stopColor="#068806" />
        <stop offset="1" stopColor="#035003" />
      </linearGradient>
    </defs>

    <path
      d="M326 332L326 345Q328 370 336 379Q343 387 360 387L480 391L575 388Q605 387 614 378Q624 366 628 336L610 300H345Z"
      fill="url(#skirt)" stroke="#50705a" strokeWidth="1"
    />
    <path
      fillRule="evenodd" fill="#10fb10" stroke={edge} strokeWidth="1"
      d="M328 128L395 133L480 136.500L540 135L608 130L617.500 153L631 210L638 240L640 265L632 271L635 301L630 336L612 337Q607 358 590 369L480 374L362 368Q336 358 330 334L325.500 333L323 268L313 262L311 235L316 190L322 151Z
         M357 167L400 169L475 171L540 171L588 169Q595 170 598 178L610 238Q611 254 595 257L566 262L540 264L519 266L480 267L440 265L403 262L367 255L352 252Q340 247 341 235L347 176Q349 167 357 167Z"
    />

    <path d="M344 270L400 276L480 283L545 279L611 268L606 330Q601 352 588 358L480 363L364 357Q349 350 347 330Z" fill="url(#belly)" />
    <path mask="url(#lowOnly)" d="M344 270L611 268L606 330Q601 352 588 358L480 363L364 357Q349 350 347 330Z" fill="url(#sideShade)" />
    <path d="M614 266L628 262L631 334L608 331Z" fill="url(#sidePanel)" stroke={edge} strokeWidth=".8" />
    <path d="M629 262L640 262L632 271L635 301L630 334Z" fill="#10e010" stroke={edge} strokeWidth=".8" />
    <path d="M612 309L629 308M608 331L629 336" stroke={edge} fill="none" />
    <path d="M347 340Q352 357 366 362L480 368L586 363Q600 359 607 342" fill="none" stroke="#056405" strokeWidth="7" />
    <path d="M333 333Q340 357 362 367L480 374L590 369Q611 360 617 337" fill="none" stroke={edge} strokeWidth="8" />
    <path d="M333 333Q340 357 362 367L480 374L590 369Q611 360 617 337" fill="none" stroke="#0df40d" strokeWidth="6" />

    <path d="M329 172Q335 146 361 145L400 147L480 150L527 148L578 147C600 147 610 162 613 174L622 210L630 250V264" fill="none" stroke="#4b8c55" strokeWidth="7" />
    <path d="M330 170Q337 146 361 145" fill="none" stroke="#0a5a10" strokeWidth="4" />
    <path d="M350 147L361 145L400 147L480 150L527 148L578 147" fill="none" stroke="#030903" strokeWidth="4" />
    <path d="M577 147C600 147 610 162 613 174L622 210L630 250V262" fill="none" stroke="url(#bandV)" strokeWidth="5" />
    <path d="M327 172L321 215L318 250L326 268L331 310" fill="none" stroke="#4b8c55" strokeWidth="5" />
    <path d="M328 172L322 215L319 250L327 268L332 310" fill="none" stroke="#0fd415" strokeWidth="3" />
    <path d="M360 156Q343 158 341 172L332 246L342 266L346 284" fill="none" stroke="#64806c" strokeWidth="6" />
    <path d="M360 156Q343 158 341 172" fill="none" stroke="#0b9a12" strokeWidth="3" />
    <path d="M340 172L332 246L342 266L346 284" fill="none" stroke="#045c08" strokeWidth="4" />
    <path d="M360 155L480 159.500L580 158Q596 159 601 172L617 250M360 158L480 161.500L578 160Q594 161 599 174L614 250L609 285" fill="none" stroke={edge} strokeWidth=".8" />
    <path d="M603 164L609 185L623 250L618 268" fill="none" stroke={edge} />
    <path d={frameLow} fill="none" stroke="#6a7c70" strokeWidth="5" />
    <path d="M332 246L342 266L346 284L347 330" fill="none" stroke="#055008" strokeWidth="3" />
    <path d="M606 328L612 268L617 250" fill="none" stroke="#0a9a10" strokeWidth="3" />
    <path d="M347 330Q349 352 364 357L480 363L588 358Q603 352 606 328" fill="none" stroke="#040704" strokeWidth="3" />
    <path d="M322 151L337 152M604 154L617 153M331 172H345M336 200H342M325 305L348 308M325 333L350 329M326 336L350 336M362 364V371M588 365V372" stroke={edge} fill="none" />
    <path d="M477 137V171M477 360V391" stroke="#5c7a5f" strokeWidth=".8" />
    <rect x="324" y="186" width="5" height="15" fill="#16c41c" stroke="#6a8a70" strokeWidth=".7" />
    <rect x="615" y="187" width="6" height="14" fill="#16c41c" stroke="#6a8a70" transform="rotate(-12 618 194)" />
    <rect x="323" y="295" width="4" height="9" fill="#0c6a10" stroke="#6a8a70" />
    <path d="M632 297l4 4-4 9z" fill="#10b014" stroke="#6a8a70" />
    <Bracket x={394} y={138} angle={2} />
    <Bracket x={526} y={139} angle={-2} />

    <g fill="#12ea12" stroke={edge} strokeWidth="1.600">
      <path d="M366 256L389 260L388 272L366 269Z" />
      <path d="M404 263L441 266L439 279L403 275Z" />
      <path d="M458 268L504 267V281L456 280Z" />
      <path d="M519 267L556 262L553 276L521 279Z" />
      <path d="M568 262L590 257V270L569 274Z" />
    </g>
    <path d="M344 269L400 277L480 283L545 279L611 269" fill="none" stroke="#2f8a3c" strokeDasharray="3 1" />

    <path d={slot} fill="none" stroke="#63776a" strokeWidth="8" strokeLinejoin="round" />
    <path d={slot} fill="none" stroke="#088a0c" strokeWidth="6" strokeLinejoin="round" />
    <path d={slot} fill="#e1e3e4" stroke="#56705e" strokeWidth=".8" />
    <path d="M372 312L393 317L408 335Q416 348 436 349L520 348Q537 348 546 341L566 322L584 318" fill="none" stroke="#2fbf3a" strokeWidth="1.400" />

    <path d="M357 316L417 351L415 354L362 350Z" fill="#0a860e" stroke="#6b7f70" strokeWidth="2" strokeLinejoin="round" />
    <path d="M361 321L405 346L362 346Z" fill="#e0e2e3" />
    <path d="M359 320L363 349L412 352" fill="none" stroke="#27b531" />
    <path d="M361 327a5 5 0 013 10h-3zM373 329a5 5 0 1010 4zM377 347a5 5 0 0111 0z" fill="#067009" />
    <path d="M599 318L593 350L538 354L540 349Z" fill="#0a860e" stroke="#6b7f70" strokeWidth="2" strokeLinejoin="round" />
    <path d="M592 324L589 348L549 348Z" fill="#e0e2e3" />
    <path d="M597 321L591 349L543 352" fill="none" stroke="#27b531" />
    <path d="M591 329a5 5 0 00-3 11h2zM580 330a5 5 0 11-10 5zM565 348a5 5 0 0111 0z" fill="#067009" />

    <path d="M428 297H456V300H437V317H428Z" fill="#e8e9ea" stroke="#5f7563" strokeWidth=".8" />
    <rect x="435" y="300" width="21" height="22" fill="#079b0b" stroke="#6d7f70" />
    <path d="M435.500 302H456V307H435.500Z" fill="#0cc010" />
    <path d="M436 309H456" stroke="#103a12" strokeWidth="2" />
    <circle cx="455" cy="299" r="1" fill="#3550d8" />
    <path d="M506 298H532V317H528V301H506Z" fill="#e8e9ea" stroke="#5f7563" strokeWidth=".8" />
    <rect x="507" y="301" width="22" height="21" fill="#069009" stroke="#6d7f70" />
    <path d="M508 302H529V308H508Z" fill="#24d22c" />
    <path d="M508 310H529" stroke="#103a12" strokeWidth="2" />
    <path d="M505 304l3-3v18l-3-2z" fill="#6b5a1e" />

    <circle cx="481" cy="302" r="9.500" fill="#e4e5e6" stroke="#6d7f70" />
    <ellipse cx="480.500" cy="275" rx="2.500" ry="4" fill="#e4e5e6" stroke="#6d7f70" />
    <rect x="466" y="376" width="23" height="7" rx="1" fill="#18f01c" stroke="#5f7d68" strokeWidth="1.600" />
    <circle cx="477" cy="379.500" r="1" fill="#dfe3e2" />

    <g fill="none" stroke="#9c4d43" strokeWidth=".9">
      <path d="M481 275V325M486 268L482 305M481 282H526M506 275V305H482" />
      <path d="M485 261l4 5M489 261l-4 5M480 328l2.500 3M485 328l-2.500 3v4M531 280h4l-4 5h4" />
      <path d="M479 318l2 7 2-7zM520 280l8 2-8 2z" fill="#9c4d43" />
      <path d="M484 270l3-5 1 6z" fill="#6b2a26" />
    </g>

    <g>
      <path d="M238 377l4-3h8l-2 3zM238 377h10v13h-10z" fill="#cbcdcf" stroke="#aeb1b3" />
      <path d="M248 377l3-3v13l-3 3z" fill="#b9bbbd" />
      <path d="M250 385V369" stroke="#2d6a36" strokeWidth="1.200" />
      <path d="M248 374l2-6 2 6z" fill="#2d6a36" />
      <path d="M248 385H234" stroke="#2848d8" />
      <path d="M237 382l-6 2.500 6 2.500z" fill="#2848d8" />
      <path d="M249 385l3 7" stroke="#d03838" strokeWidth="1.200" />
      <circle cx="249" cy="385" r="2" fill="#e4c4c4" />
      <path d="M225.500 382h4l-4 5h4" fill="none" stroke="#2848d8" />
      <path d="M248 364l2 2 2-2M250 366v3" fill="none" stroke="#2d7a36" />
      <path d="M249 392l4 5M253 392l-4 5" fill="none" stroke="#d03838" />
    </g>
  </svg>
);

/* ---------- page ---------- */

const IconRun = ({ names, w, on = [] }: { names: string[]; w: number; on?: string[] }) => (
  <QuickTools $w={w}>
    {names.map((n, i) => (
      <IconButton key={n + i} aria-label={n} $w={n === "drop" ? 5 : 13} $on={on.includes(n)}>
        <Ico n={n} s={n === "drop" ? 5 : 11} />
      </IconButton>
    ))}
  </QuickTools>
);

export default function App() {
  return (
    <Shell>
      <GlobalStyle />
      <TitleBar>
        <Logo>NX</Logo>
        <QuickTools $w={48}>
          {["save", "undo", "drop", "redo"].map((n) => (
            <IconButton key={n} aria-label={n} $w={n === "drop" ? 5 : 9}>
              <Ico n={n} s={n === "drop" ? 5 : 9} />
            </IconButton>
          ))}
        </QuickTools>
        <Rule $m={3} />
        <QuickTools $w={50}>
          {["cut", "copy", "paste", "target"].map((n) => (
            <IconButton key={n} aria-label={n}>
              <Ico n={n} s={9} />
            </IconButton>
          ))}
        </QuickTools>
        <Rule $m={3} />
        <QuickTools $w={35}>
          <IconButton aria-label="touch"><Ico n="touch" /></IconButton>
          <IconButton aria-label="options" $w={5}><Ico n="drop" s={5} /></IconButton>
          <IconButton aria-label="brush"><Ico n="brush" s={9} /></IconButton>
        </QuickTools>
        <Rule $m={3} />
        <TextTool><Ico n="switchWin" s={10} />Switch Window</TextTool>
        <Rule $h={0} $m={0} />
        <TextTool><Ico n="windowIc" s={10} />Window<Ico n="drop" s={5} /><Ico n="dropBar" s={5} /></TextTool>
        <AppTitle>NX 12 - Modeling</AppTitle>
        <Brand>SIEMENS</Brand>
        <WindowButtons>
          <IconButton aria-label="Minimize"><Ico n="minimize" s={8} /></IconButton>
          <IconButton aria-label="Restore"><Ico n="restore" s={9} /></IconButton>
          <IconButton aria-label="Close"><Ico n="close" s={8} /></IconButton>
        </WindowButtons>
      </TitleBar>

      <TabBar>
        <Tab $w={34} $kind="file">File</Tab>
        <Tab $w={56}>Assemblies</Tab>
        <Tab $w={34}>Home</Tab>
        <Tab $w={36}>Curve</Tab>
        <Tab $w={39}>Surface</Tab>
        <Tab $w={43}>Analysis</Tab>
        <Tab $w={30}>View</Tab>
        <Tab $w={41}>Render</Tab>
        <Tab $w={33}>Tools</Tab>
        <Tab $w={53} $kind="active">Application</Tab>
        <TabEnd>
          <SearchBox>
            <SearchInput aria-label="Command finder" defaultValue="dra" />
            <Ico n="search" s={9} />
          </SearchBox>
          <IconButton aria-label="Full screen"><Ico n="fullscreen" s={10} /></IconButton>
          <IconButton aria-label="Minimize ribbon"><Ico n="chevUp" s={9} /></IconButton>
          <IconButton aria-label="Help"><Ico n="help" s={8} /></IconButton>
        </TabEnd>
      </TabBar>

      <Ribbon>
        <Group $w={212}>
          <GroupBody $pad={6}>
            <BigTool $w={33}><Ico n="modeling" s={19} />Modeling</BigTool>
            <BigTool $w={24}><Ico n="sheet" s={19} /><span>Sheet<br />Metal</span></BigTool>
            <BigTool $w={28}><Ico n="shape" s={19} /><span>Shape<br />Studio</span></BigTool>
            <Tools w={42} items={[["drafting", "Drafting"], ["layout", "Layout"], ["dmu", "DMU", "off"]]} />
            <Tools w={74} items={[["asm", "Assemblies", "on"], ["gears", "Animation Designer"], ["pmi", "PMI"]]} />
          </GroupBody>
          <GroupFoot>Design</GroupFoot>
        </Group>
        <Group $w={189}>
          <GroupBody $pad={7}>
            <Tools tall s={13} w={92} items={[["mill", "Manufacturing"], ["additive", "Additive Manufacturing"]]} />
            <Tools tall s={14} w={65} items={[["inspect", "Inspection"], ["robot", "Line Designer"]]} />
            <More icon="burst" />
          </GroupBody>
          <GroupFoot>Manufacturing</GroupFoot>
        </Group>
        <Group $w={74}>
          <GroupBody $pad={6}>
            <Tools tall s={14} w={47} items={[["prepost", "Pre/Post"], ["motion", "Motion"]]} />
            <Tools tall s={14} w={14} items={[["pipe", ""], ["flow", ""]]} />
          </GroupBody>
          <GroupFoot>Simulation</GroupFoot>
        </Group>
        <Group $w={84}>
          <GroupBody $pad={6}>
            <Tools w={52} items={[["electrical", "Electrical"], ["mechanical", "Mechanical"], ["logical", "Logical"]]} />
            <More icon="routingMore" />
          </GroupBody>
          <GroupFoot>Routing</GroupFoot>
        </Group>
        <Group $w={100}>
          <GroupBody $pad={3}>
            <BigTool $w={28}><Ico n="mold" s={19} />Mold</BigTool>
            <Tools w={67} items={[["progDie", "Progressive Die"], ["electrode", "Electrode Design"], ["engDie", "Engineering Die"]]} />
          </GroupBody>
          <GroupFoot>Process Specific</GroupFoot>
        </Group>
        <Group $w={73}>
          <GroupBody $pad={2}>
            <BigTool $w={54}><Ico n="car" s={19} /><span>Vehicle Design<br />Automation</span></BigTool>
            <Tools w={12} items={[["bars", ""], ["dieStack", ""], ["press", ""]]} />
          </GroupBody>
          <GroupFoot>Automotive</GroupFoot>
        </Group>
        <Group $w={25}>
          <GroupBody $pad={1}>
            <More icon="tableIc" />
          </GroupBody>
        </Group>
      </Ribbon>

      <SelectionBar>
        <TextTool><Ico n="menuList" s={9} /><span><u>M</u>enu</span><Ico n="drop" s={5} /></TextTool>
        <Rule $h={0} $m={4} />
        <SelectWrap $w={72}>
          <Select aria-label="Selection filter"><option>No Selection Filter</option></Select>
          <Ico n="drop" s={7} />
        </SelectWrap>
        <SelectWrap $w={75}>
          <Select aria-label="Selection scope"><option>Entire Assembly</option></Select>
          <Ico n="drop" s={7} />
        </SelectWrap>
        <IconRun
          w={141}
          names={["snapGrey", "filterGrey", "redPlus", "drop", "cornerGrey", "stepGrey", "wires", "marquee", "drop", "view", "blueCube"]}
        />
        <Rule $h={0} $m={0} />
        <IconRun
          w={204}
          names={["snapPts", "endPt", "midPt", "curveS", "poly", "wave", "cross", "circleDot", "quad", "plus", "slash", "face", "purple", "meshGrey"]}
          on={["snapPts", "endPt", "midPt", "poly", "wave", "circleDot", "plus", "slash"]}
        />
        <Rule />
        <IconRun
          w={158}
          names={["zoomFit", "panel", "rotate", "blocks", "clip", "orient", "drop", "shade", "drop", "stripes", "drop", "snapLink", "drop"]}
        />
        <Rule />
        <Grow />
        <IconButton aria-label="Toolbar options"><Ico n="drop" s={5} /></IconButton>
      </SelectionBar>

      <Workspace>
        <ResourceBar>
          {resources.map(([n, h]) => (
            <Resource key={n} aria-label={n} $h={h} $on={n === "partNav"}>
              <Ico n={n} s={n === "gear" ? 9 : 14} />
            </Resource>
          ))}
        </ResourceBar>
        <Navigator>
          <NavTitle>
            Part Navigator
            <Ico n="maxi" s={8} />
          </NavTitle>
          <TreeFrame>
            <TreeClip>
              <Tree>
                <thead>
                  <tr>
                    <HeadCell $w={118}>Name<Ico n="sort" s={6} /></HeadCell>
                    <HeadCell $w={59}>Up to Date</HeadCell>
                    <HeadCell>Cor</HeadCell>
                  </tr>
                </thead>
                <tbody>
                  {rows.map((r, i) => (
                    <tr key={i}>
                      <NameCell>
                        <RowLabel $depth={r.d} $dim={r.dim}>
                          <Toggle tabIndex={-1} aria-label={`Expand ${r.text}`}>{r.t}</Toggle>
                          {r.tick && <Tick type="checkbox" defaultChecked $warn={r.warn} aria-label={r.text} />}
                          {r.pre && <Ico n="check" s={9} />}
                          <Ico n={r.icon} s={10} />
                          <span>{r.text}</span>
                        </RowLabel>
                      </NameCell>
                      <Cell>{r.status && <Ico n={r.status} s={8} />}</Cell>
                      <Cell />
                    </tr>
                  ))}
                </tbody>
              </Tree>
            </TreeClip>
            <VScroll>
              <Ico n="up" s={8} />
              <VThumbArea><VThumb /></VThumbArea>
              <Ico n="down" s={8} />
            </VScroll>
          </TreeFrame>
          <HScroll>
            <Ico n="left" s={9} />
            <HThumb />
            <Ico n="right" s={9} />
          </HScroll>
          <Splitter />
          <Section>Dependencies<Ico n="chevD" s={7} /></Section>
          <Section>Details<Ico n="chevD" s={7} /></Section>
          <Section>Preview<Ico n="chevD" s={7} /></Section>
        </Navigator>
        <Stage>
          <DocTabs>
            <DocTab>
              <Ico n="part" s={9} />
              back_door_inner_panel_body.prt
              <Ico n="pageOut" s={7} />
              <Ico n="closeW" s={7} />
            </DocTab>
          </DocTabs>
          <Canvas>
            <Tailgate />
          </Canvas>
        </Stage>
      </Workspace>

      <StatusBar>
        Select objects and use MB3, or double-click an object
        <Grow />
        <Ico n="grip" s={10} />
        <Ico n="fullscreen" s={10} />
      </StatusBar>

      <Taskbar>
        <Start aria-label="Start"><Ico n="winLogo" s={11} /></Start>
        <TaskSearch>
          <Ico n="ring" s={14} />
          <TaskInput aria-label="Search" placeholder="Type here to search" />
          <Ico n="mic" s={11} />
        </TaskSearch>
        <TaskApp aria-label="Task view"><Ico n="taskView" s={11} /></TaskApp>
        <TaskApp aria-label="Mail"><Ico n="mail" s={14} /></TaskApp>
        <TaskApp aria-label="Store"><Ico n="store" s={14} /></TaskApp>
        <TaskApp aria-label="Edge"><Ico n="edge" s={14} /></TaskApp>
        <TaskApp aria-label="File Explorer" $state="open"><Ico n="explorer" s={14} /></TaskApp>
        <TaskApp aria-label="NX" $state="active"><Ico n="nxApp" s={15} /></TaskApp>
        <TaskApp aria-label="Chrome" $state="open"><Ico n="chrome" s={15} /></TaskApp>
        <Tray>
          <Ico n="people" s={10} />
          <Rule $h={0} $m={0} />
          <Ico n="trayUp" s={9} />
          <Ico n="battery" s={10} />
          <Ico n="sound" s={10} />
          <Ico n="wifi" s={8} />
          <span>ENG</span>
          <Clock>11:26<br />11-12-2022</Clock>
          <Ico n="note" s={11} />
        </Tray>
      </Taskbar>
    </Shell>
  );
}
